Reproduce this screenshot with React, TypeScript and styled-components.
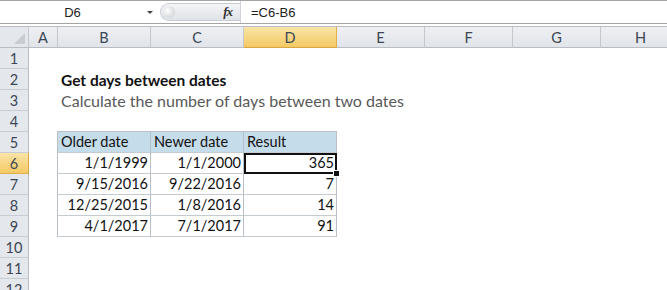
import React from 'react'
import styled, { createGlobalStyle, css } from 'styled-components'

const GlobalStyle = createGlobalStyle`
  html, body {
    margin: 0;
    padding: 0;
    background: #ffffff;
  }
  body {
    font-family: Lato, "Open Sans", sans-serif;
    width: 667px;
    height: 290px;
    overflow: hidden;
  }
`

const colWidths = [29, 29, 93, 93, 93, 88, 88, 88, 80]
const colNames = ['A', 'B', 'C', 'D', 'E', 'F', 'G', 'H']

type CellData = { text?: string, kind?: 'title' | 'sub' | 'head' | 'num' }

// row number -> cells for columns B, C, D
const rows: Record<number, CellData[]> = {
  2: [{ text: 'Get days between dates', kind: 'title' }],
  3: [{ text: 'Calculate the number of days between two dates', kind: 'sub' }],
  5: [
    { text: 'Older date', kind: 'head' },
    { text: 'Newer date', kind: 'head' },
    { text: 'Result', kind: 'head' }
  ],
  6: [{ text: '1/1/1999', kind: 'num' }, { text: '1/1/2000', kind: 'num' }, { text: '365', kind: 'num' }],
  7: [{ text: '9/15/2016', kind: 'num' }, { text: '9/22/2016', kind: 'num' }, { text: '7', kind: 'num' }],
  8: [{ text: '12/25/2015', kind: 'num' }, { text: '1/8/2016', kind: 'num' }, { text: '14', kind: 'num' }],
  9: [{ text: '4/1/2017', kind: 'num' }, { text: '7/1/2017', kind: 'num' }, { text: '91', kind: 'num' }]
}

const App = () => {
  const rowNums = Array.from({ length: 12 }, (_, i) => i + 1)

  return (
    <>
      <GlobalStyle />
      <Window>
        <FormulaBar>
          <NameBox>
            <NameText>D6</NameText>
            <DropArrow />
          </NameBox>
          <FxArea>
            <Grip />
            <Fx>fx</Fx>
          </FxArea>
          <Formula>=C6-B6</Formula>
        </FormulaBar>

        <Sheet>
          <Corner>
            <CornerTriangle />
          </Corner>
          {colNames.map((c) => (
            <ColHeader key={c} $active={c === 'D'}>{c}</ColHeader>
          ))}

          {rowNums.map((r) => {
            const data = rows[r]
            const inTable = r >= 5 && r <= 9
            return (
              <React.Fragment key={r}>
                <RowHeader $active={r === 6}>{r}</RowHeader>
                <Cell />
                {data && !inTable ? (
                  <Cell $span={3}>
                    <CellText $kind={data[0].kind}>{data[0].text}</CellText>
                  </Cell>
                ) : inTable ? (
                  data.map((d, i) => (
                    <TableCell
                      key={i}
                      $head={d.kind === 'head'}
                      $first={i === 0}
                      $top={r === 5}
                      $selected={r === 6 && i === 2}
                    >
                      <CellText $kind={d.kind}>{d.text}</CellText>
                      {r === 6 && i === 2 && <FillHandle />}
                    </TableCell>
                  ))
                ) : (
                  <>
                    <Cell />
                    <Cell />
                    <Cell />
                  </>
                )}
                <Cell />
                <Cell />
                <Cell />
                <Cell />
              </React.Fragment>
            )
          })}
        </Sheet>
      </Window>
    </>
  )
}

export default App

const Window = styled.div`
  width: 667px;
  height: 290px;
  overflow: hidden;
  background: #ffffff;
`

const FormulaBar = styled.div`
  display: flex;
  align-items: center;
  height: 22px;
  border-top: 1px solid #a5a5a5;
  border-bottom: 1px solid #a5a5a5;
  margin-bottom: 2px;
  background: #ffffff;
`

const NameBox = styled.div`
  position: relative;
  width: 160px;
  height: 100%;
  display: flex;
  align-items: center;
`

const NameText = styled.span`
  width: 145px;
  text-align: center;
  font-family: "Liberation Sans", Arial, sans-serif;
  font-size: 13px;
  color: #222222;
`

const DropArrow = styled.span`
  width: 0;
  height: 0;
  border-left: 3px solid transparent;
  border-right: 3px solid transparent;
  border-top: 3px solid #444444;
  margin-left: 2px;
`

const FxArea = styled.div`
  width: 80px;
  height: 18px;
  display: flex;
  align-items: center;
  justify-content: space-between;
  border-radius: 9px 0 0 9px;
  background: linear-gradient(#f4f5f7, #dfe2e6);
  border: 1px solid #c8ccd2;
  border-right: none;
  padding: 0 8px 0 2px;
  box-sizing: border-box;
`

const Grip = styled.span`
  width: 12px;
  height: 12px;
  border-radius: 50%;
  background: radial-gradient(circle at 40% 40%, #ffffff, #c4c8ce);
`

const Fx = styled.span`
  font-family: "Liberation Serif", serif;
  font-style: italic;
  font-weight: bold;
  font-size: 13px;
  color: #333333;
  letter-spacing: -1px;
`

const Formula = styled.div`
  flex: 1;
  height: 100%;
  display: flex;
  align-items: center;
  padding-left: 10px;
  border-left: 1px solid #d0d4da;
  font-family: "Liberation Sans", Arial, sans-serif;
  font-size: 13px;
  color: #222222;
`

const Sheet = styled.div`
  display: grid;
  grid-template-columns: ${colWidths.map((w) => `${w}px`).join(' ')};
  grid-auto-rows: 21px;
  border-top: 1px solid #b9bcc2;
`

const headerBase = css`
  display: flex;
  align-items: center;
  justify-content: center;
  font-family: Lato, "Open Sans", sans-serif;
  font-size: 14.5px;
  color: #3c4654;
  box-sizing: border-box;
`

const Corner = styled.div`
  position: relative;
  background: #e4e7ec;
  border-right: 1px solid #c3c7ce;
  border-bottom: 1px solid #b9bcc2;
`

const CornerTriangle = styled.span`
  position: absolute;
  right: 3px;
  bottom: 3px;
  width: 0;
  height: 0;
  border-left: 11px solid transparent;
  border-bottom: 11px solid #c9ccd1;
`

const ColHeader = styled.div<{ $active?: boolean }>`
  ${headerBase}
  background: ${(p) => p.$active
    ? 'linear-gradient(#f9e4a8, #f4c963)'
    : 'linear-gradient(#eef0f3, #e1e4e9)'};
  border-right: 1px solid ${(p) => (p.$active ? '#e2b04a' : '#c3c7ce')};
  border-bottom: 1px solid ${(p) => (p.$active ? '#d8a646' : '#b9bcc2')};
`

const RowHeader = styled.div<{ $active?: boolean }>`
  ${headerBase}
  background: ${(p) => p.$active
    ? 'linear-gradient(#f9e4a8, #f4c963)'
    : '#e4e7ec'};
  border-right: 1px solid ${(p) => (p.$active ? '#d8a646' : '#b9bcc2')};
  border-bottom: 1px solid ${(p) => (p.$active ? '#e2b04a' : '#c9ccd2')};
`

const Cell = styled.div<{ $span?: number }>`
  ${(p) => p.$span && `grid-column: span ${p.$span};`}
  position: relative;
  display: flex;
  align-items: flex-end;
  padding: 0 3px 1px;
  overflow: visible;
  white-space: nowrap;
`

const TableCell = styled.div<{ $head?: boolean, $first?: boolean, $top?: boolean, $selected?: boolean }>`
  position: relative;
  display: flex;
  align-items: flex-end;
  justify-content: ${(p) => (p.$head ? 'flex-start' : 'flex-end')};
  padding: 0 2px 1px 3px;
  white-space: nowrap;
  background: ${(p) => (p.$head ? '#c5dcea' : '#ffffff')};
  border-right: 1px solid #b8bfc6;
  border-bottom: 1px solid #c4cbd1;
  ${(p) => p.$first && 'border-left: 1px solid #b8bfc6; margin-left: -1px;'}
  ${(p) => p.$top && 'border-top: 1px solid #b8bfc6; margin-top: -1px;'}
  ${(p) => p.$selected && css`
    outline: 2px solid #111111;
    outline-offset: -2px;
    z-index: 1;
  `}
`

const FillHandle = styled.span`
  position: absolute;
  right: -4px;
  bottom: -4px;
  width: 5px;
  height: 5px;
  background: #111111;
  border: 1px solid #ffffff;
`

const textSize: Record<string, string> = {
  title: '15.5px',
  sub: '16px'
}

const CellText = styled.span<{ $kind?: string }>`
  font-family: Lato, "Open Sans", sans-serif;
  font-size: ${(p) => textSize[p.$kind ?? ''] ?? '14.5px'};
  line-height: 18px;
  color: ${(p) => (p.$kind === 'sub' ? '#595959' : '#111111')};
  font-weight: ${(p) => (p.$kind === 'title' ? 700 : 400)};
`
